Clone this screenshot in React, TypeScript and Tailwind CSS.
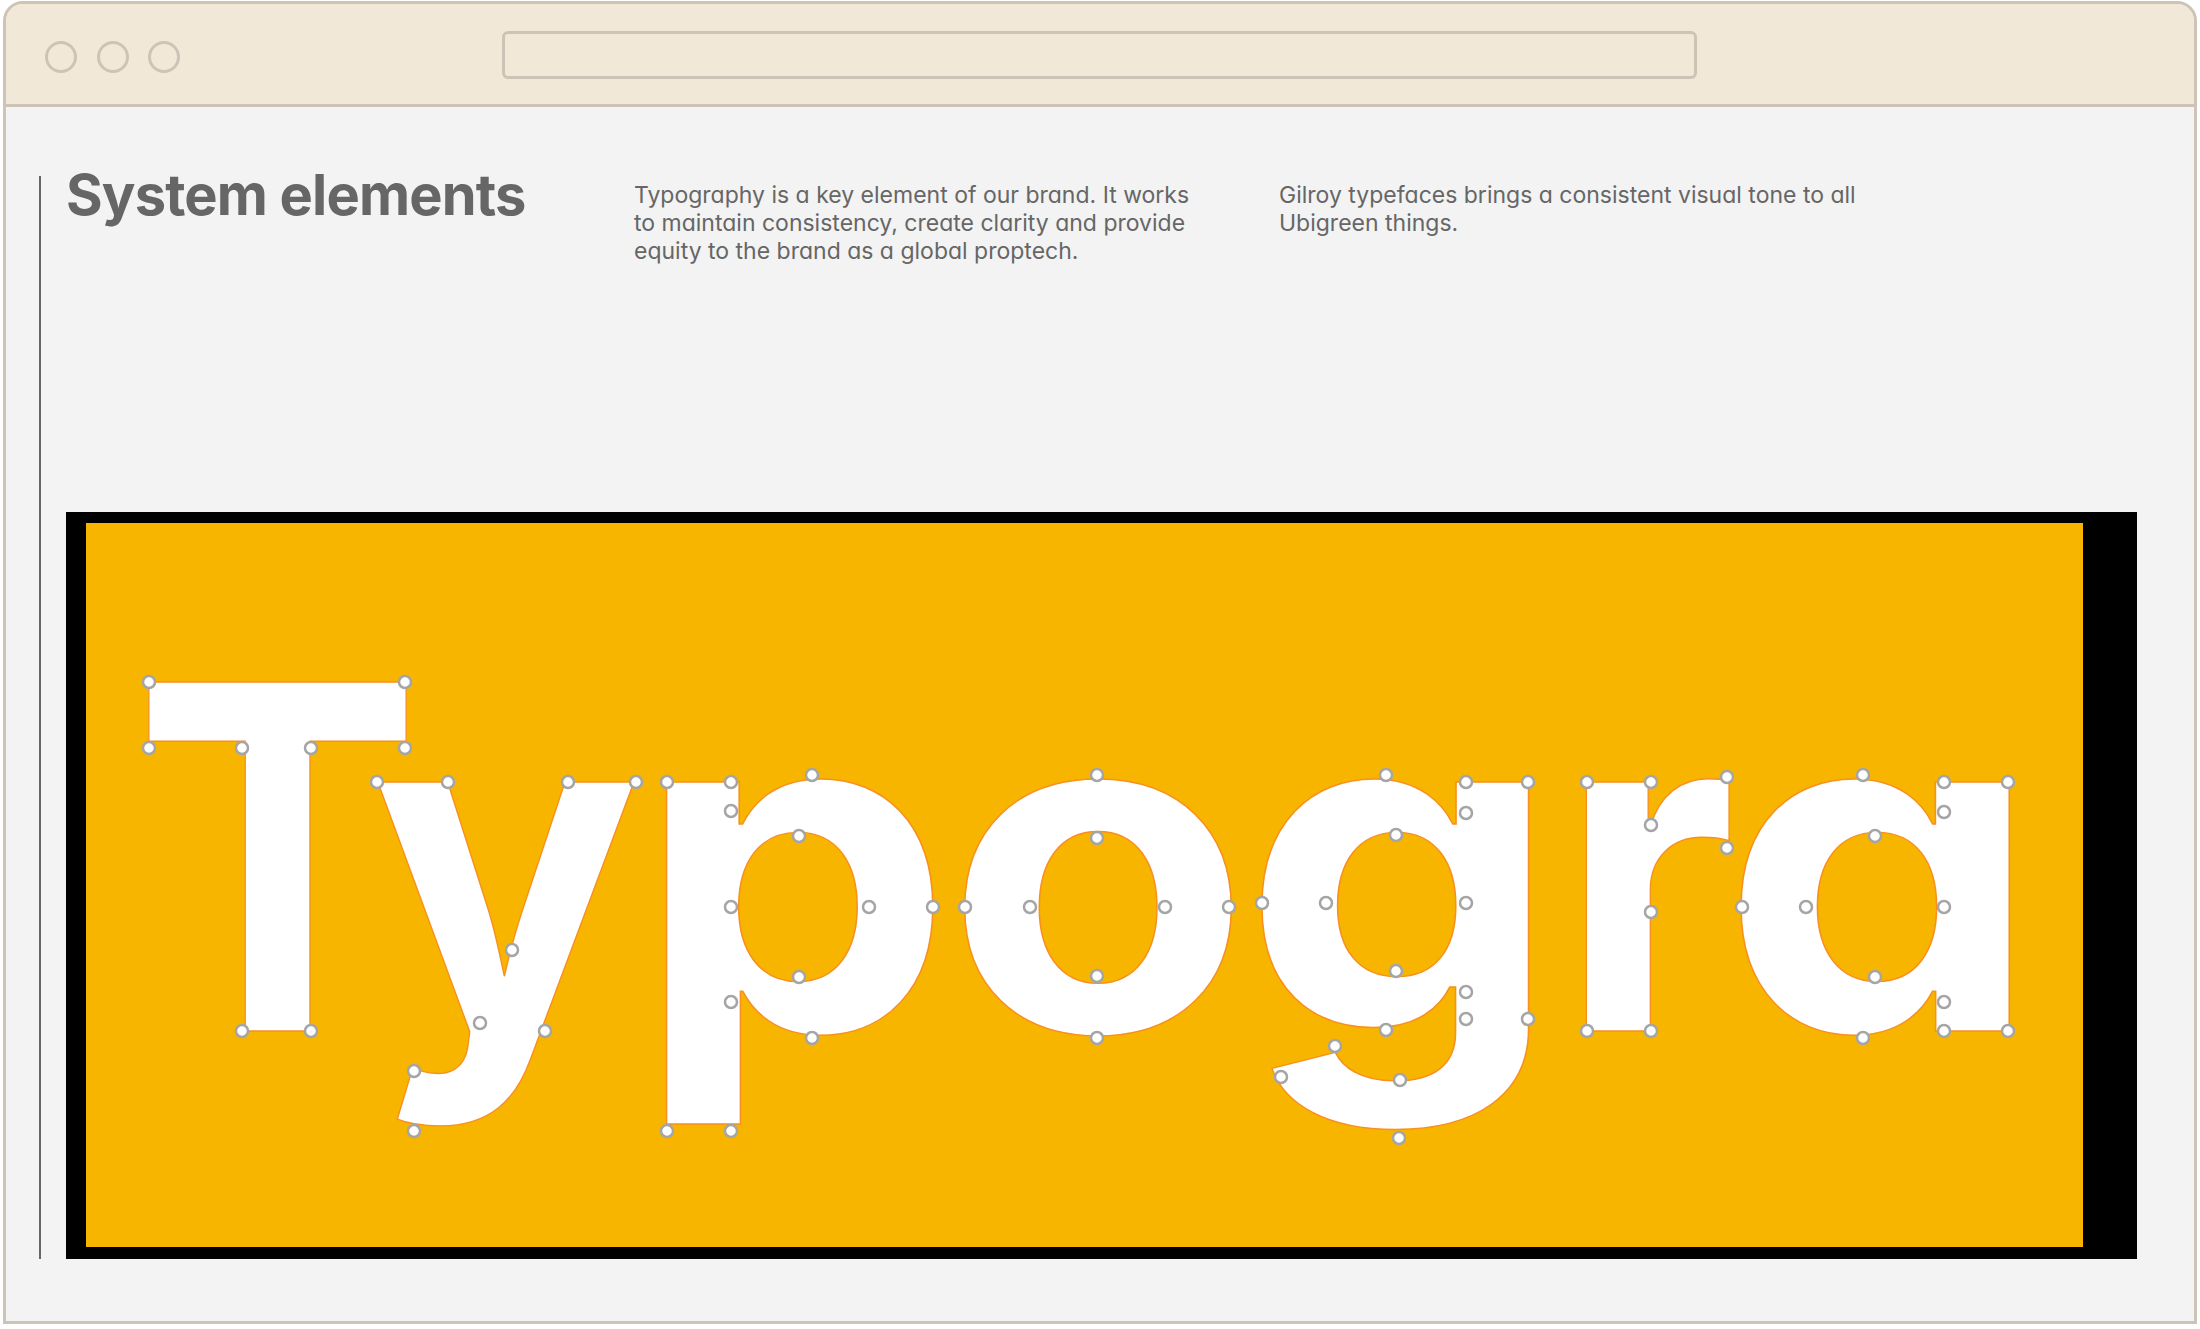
const NODES: [number, number][] = [
  // T
  [149, 683], [405, 683], [149, 749], [242, 749], [311, 749], [405, 749], [242, 1032], [311, 1032],
  // y
  [377, 783], [448, 783], [568, 783], [636, 783], [512, 951], [480, 1024], [545, 1032], [414, 1072], [414, 1132],
  // p
  [667, 783], [731, 783], [731, 812], [812, 776], [799, 837], [731, 908], [869, 908], [933, 908], [799, 978], [731, 1003], [812, 1039], [667, 1132], [731, 1132],
  // o
  [965, 908], [1030, 908], [1165, 908], [1229, 908], [1097, 776], [1097, 839], [1097, 977], [1097, 1039],
  // g
  [1386, 776], [1466, 783], [1528, 783], [1466, 814], [1396, 836], [1262, 904], [1326, 904], [1466, 904], [1396, 972], [1466, 993], [1386, 1031], [1466, 1020], [1528, 1020], [1335, 1047], [1281, 1078], [1400, 1081], [1399, 1139],
  // r
  [1587, 783], [1651, 783], [1727, 778], [1651, 826], [1727, 849], [1651, 913], [1587, 1032], [1651, 1032],
  // a
  [1742, 908], [1806, 908], [1944, 908], [1863, 776], [1944, 783], [2008, 783], [1944, 813], [1875, 837], [1875, 978], [1944, 1003], [1863, 1039], [1944, 1032], [2008, 1032],
];

// letter, x, stretched advance, font size
const LETTERS: [string, number, number, number][] = [
  ["T", 133, 289, 505],
  ["y", 371, 270, 480],
  ["p", 635, 318, 480],
  ["o", 945, 306, 480],
  ["g", 1242, 318, 480],
  ["r", 1559, 178, 480],
  ["a", 1721, 320, 480],
];

function Specimen() {
  return (
    <svg viewBox="86 524 1997 724" className="block h-[724px] w-[1997px]">
      <text
        transform="translate(0 1032) scale(1 0.95)"
        fontWeight="700"
        fill="#ffffff"
        stroke="#f98f1e"
        strokeWidth="1.5"
      >
        {LETTERS.map(([ch, x, len, size]) => (
          <tspan key={ch} x={x} y="0" fontSize={size} textLength={len} lengthAdjust="spacingAndGlyphs">
            {ch}
          </tspan>
        ))}
      </text>
      {NODES.map(([cx, cy], i) => (
        <circle key={i} cx={cx} cy={cy} r="6" fill="#ffffff" stroke="#a5a5a5" strokeWidth="2.5" />
      ))}
    </svg>
  );
}

export default function App() {
  return (
    <div className="h-[1329px] w-[2200px] bg-white pl-[3px] pt-[1px] font-['Inter',sans-serif] [font-feature-settings:'cv11']">
      <div className="flex h-[1323px] w-[2194px] flex-col overflow-hidden rounded-t-[20px] border-[3px] border-[#cdc4b7] bg-[#f3f3f3]">
        <div className="flex h-[103px] shrink-0 items-start border-b-[3px] border-[#cdc4b7] bg-[#f1e8d8] pl-[39px]">
          <div className="mt-[37px] flex gap-[19.5px]">
            <div className="size-[32px] rounded-full border-[3px] border-[#cdc4b7]" />
            <div className="size-[32px] rounded-full border-[3px] border-[#cdc4b7]" />
            <div className="size-[32px] rounded-full border-[3px] border-[#cdc4b7]" />
          </div>
          <div className="ml-[322px] mt-[27px] h-[48px] w-[1195px] rounded-[6px] border-[3px] border-[#cdc4b7]" />
        </div>
        <div className="ml-[33px] mt-[69px] flex h-[1083px] w-[2098px] flex-col border-l-2 border-[#666666] pl-[25px]">
          <div className="flex h-[336px] items-start text-[#666666]">
            <h1 className="w-[568px] -mt-[1px] text-[56px] font-bold leading-[40px] tracking-[-0.015em] whitespace-nowrap">
              System elements
            </h1>
            <p className="w-[645px] pt-[5px] text-[23px] leading-[28px]">
              Typography is a key element of our brand. It works
              <br />
              to maintain consistency, create clarity and provide
              <br />
              equity to the brand as a global proptech.
            </p>
            <p className="w-[640px] pt-[5px] text-[23px] leading-[28px]">
              Gilroy typefaces brings a consistent visual tone to all
              <br />
              Ubigreen things.
            </p>
          </div>
          <div className="h-[747px] w-[2071px] bg-black pb-[12px] pl-[20px] pr-[54px] pt-[11px]">
            <div className="h-[724px] w-[1997px] bg-[#f7b500]">
              <Specimen />
            </div>
          </div>
        </div>
      </div>
    </div>
  );
}
